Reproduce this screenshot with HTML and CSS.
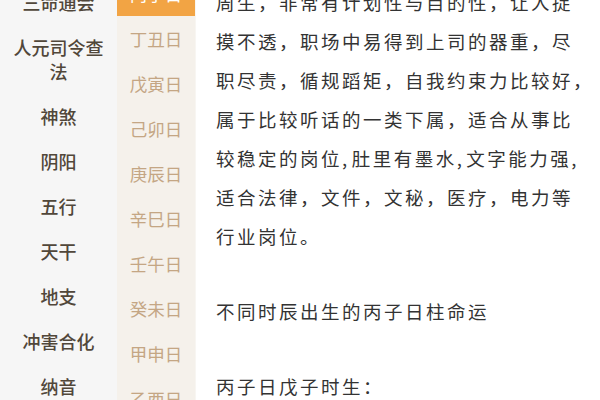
FILE: index.html
```html
<!DOCTYPE html>
<html lang="zh-CN">
<head>
<meta charset="utf-8">
<title>丙子日</title>
<link rel="stylesheet" href="styles.css">
</head>
<body>
<div class="page">
  <nav class="cats">
    <ul class="cat-list">
      <li class="cat">三命通会</li>
      <li class="cat">人元司令查法</li>
      <li class="cat">神煞</li>
      <li class="cat">阴阳</li>
      <li class="cat">五行</li>
      <li class="cat">天干</li>
      <li class="cat">地支</li>
      <li class="cat">冲害合化</li>
      <li class="cat">纳音</li>
    </ul>
  </nav>
  <nav class="days">
    <ul class="day-list">
      <li class="day active">丙子日</li>
      <li class="day">丁丑日</li>
      <li class="day">戊寅日</li>
      <li class="day">己卯日</li>
      <li class="day">庚辰日</li>
      <li class="day">辛巳日</li>
      <li class="day">壬午日</li>
      <li class="day">癸未日</li>
      <li class="day">甲申日</li>
      <li class="day">乙酉日</li>
    </ul>
  </nav>
  <main class="article">
    <div class="article-body">
      <p class="para">周生，非常有计划性与目的性，让人捉<br>摸不透，职场中易得到上司的器重，尽<br>职尽责，循规蹈矩，自我约束力比较好，<br>属于比较听话的一类下属，适合从事比<br>较稳定的岗位,<span class="gap"></span>肚里有墨水,<span class="gap"></span>文字能力强,<br>适合法律，文件，文秘，医疗，电力等<br>行业岗位。</p>
      <p class="para">不同时辰出生的丙子日柱命运</p>
      <p class="para">丙子日戊子时生：</p>
    </div>
  </main>
</div>
</body>
</html>
```
FILE: styles.css
```css
html, body {
  margin: 0;
  padding: 0;
  background: #ffffff;
}
body {
  font-family: "Noto Sans CJK SC", "Noto Sans", sans-serif;
}
.page {
  display: flex;
  width: 600px;
  height: 400px;
  overflow: hidden;
}
ul {
  list-style: none;
  margin: 0;
  padding: 0;
}
.cats {
  width: 117px;
  flex: none;
  background: #f6f6f6;
}
.cat-list {
  margin-top: -21px;
}
.cat {
  padding: 10.5px 10px;
  line-height: 24px;
  font-size: 18px;
  font-weight: 500;
  color: #51473a;
  text-align: center;
}
.days {
  width: 78px;
  flex: none;
  background: #f5f1eb;
  border-right: 1px solid #f8f6f2;
}
.day-list {
  margin-top: -29px;
}
.day {
  height: 45px;
  display: flex;
  align-items: center;
  justify-content: center;
  font-size: 17.5px;
  color: #c4a684;
}
.day.active {
  background: #f2a444;
  color: #ffffff;
}
.article {
  flex: 1;
  padding-left: 20px;
}
.article-body {
  margin-top: -17px;
}
.para {
  margin: 0 0 36px;
  font-size: 18.5px;
  letter-spacing: 2.5px;
  line-height: 39px;
  color: #333333;
  white-space: nowrap;
}
.gap {
  display: inline-block;
  width: 2px;
}
```
